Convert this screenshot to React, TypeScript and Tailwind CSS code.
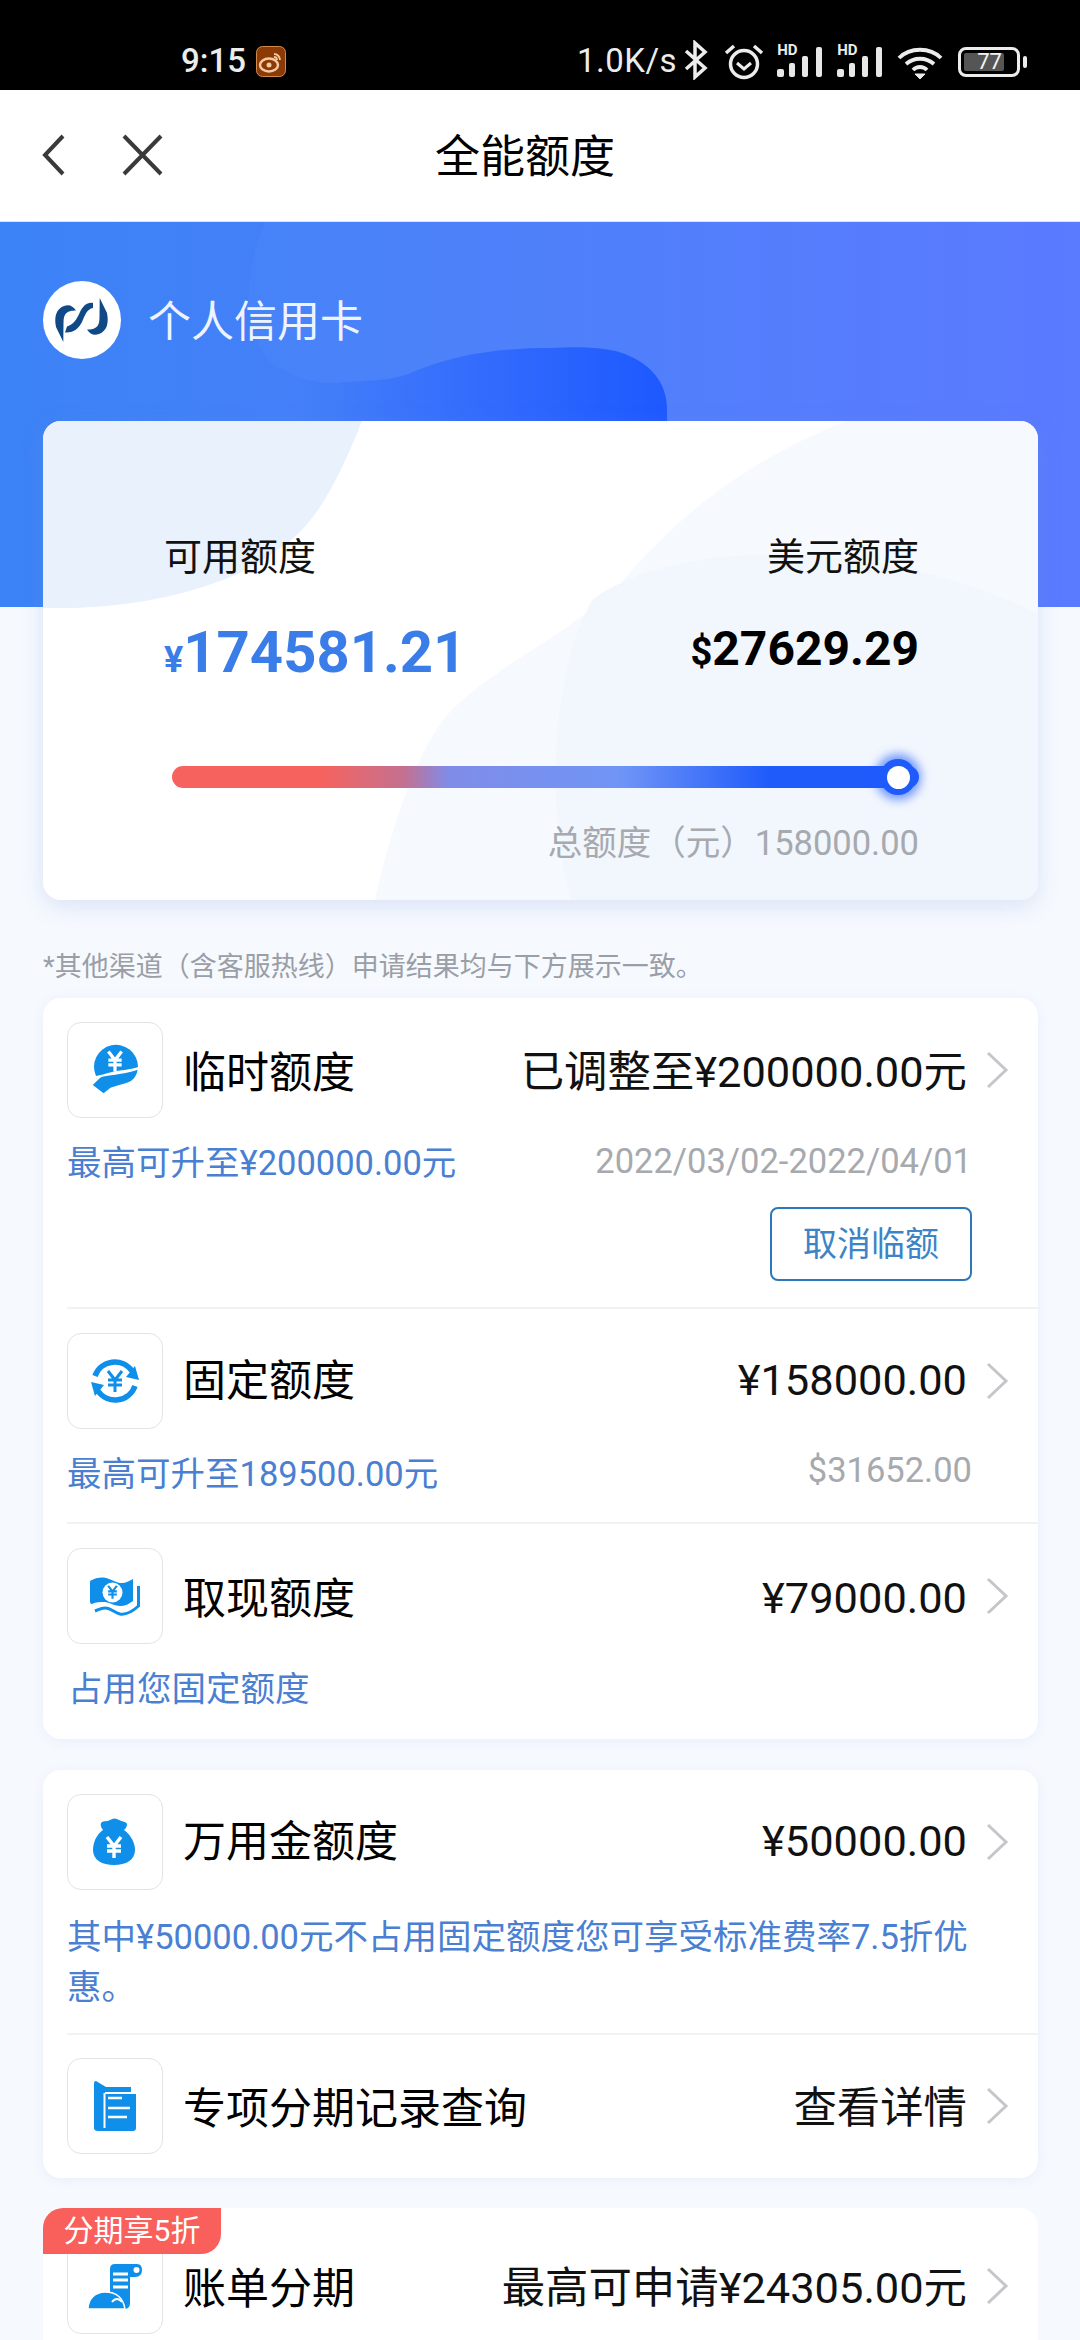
const cjk = "font-['Roboto','Noto_Sans_CJK_SC',sans-serif]";

function Chevron() {
  return (
    <svg width="26" height="38" viewBox="0 0 26 38" fill="none" className="shrink-0">
      <path d="M4 2 L22 19 L4 36" stroke="#c4c6c9" strokeWidth="3" />
    </svg>
  );
}

function Yen({ x, y, s = 1, color = '#fff', w = 3 }: { x: number; y: number; s?: number; color?: string; w?: number }) {
  return (
    <path
      transform={`translate(${x} ${y}) scale(${s})`}
      d="M-7 -10 L0 -1 L7 -10 M-7 -1 H7 M-7 4 H7 M0 -1 V11"
      stroke={color}
      strokeWidth={w}
      fill="none"
    />
  );
}

function HandIcon() {
  return (
    <svg width="50" height="52" viewBox="0 0 50 52">
      <path d="M6 32 A22 22 0 1 1 48 23 C40 26 30 26 22 28 C15 30 10 31 6 32 Z" fill="#0f8fe9" />
      <Yen x={25} y={17} s={0.95} w={3.4} />
      <path d="M1.7 41 L10 33 C16 30 22 31 28 29.5 C35 28 42 28 48.5 24.5 C48 30 46 34 42 37 C37 41 28 41 20 45 L13.5 50 Z" fill="#0f8fe9" stroke="#fff" strokeWidth="1.4" />
    </svg>
  );
}

function CycleIcon() {
  return (
    <svg width="50" height="50" viewBox="0 0 50 50" fill="none">
      <path d="M5 20 A21 21 0 0 1 42 15" stroke="#0f8fe9" strokeWidth="5.5" />
      <path d="M45 30 A21 21 0 0 1 8 35" stroke="#0f8fe9" strokeWidth="5.5" />
      <path d="M36 21 L49 24 L45 10 Z" fill="#0f8fe9" />
      <path d="M14 29 L1 26 L5 40 Z" fill="#0f8fe9" />
      <Yen x={25} y={25} s={1} color="#0f8fe9" />
    </svg>
  );
}

function BillIcon() {
  return (
    <svg width="52" height="50" viewBox="0 0 52 50">
      <path d="M3 9 C10 6 14 6 20 8 C26 10 28 12 33 12 C37 12 40 10 44 8 V30 C40 33 36 35 31 35 C26 35 22 32 16 31 C11 31 7 31 3 33 Q1 33 1 31 V11 Q1 9 3 9 Z" fill="#0f8fe9" />
      <circle cx="23.5" cy="21.5" r="10" fill="#fff" />
      <Yen x={23.5} y={21} s={0.62} color="#0f8fe9" w={3.4} />
      <path d="M49.5 15 V35 C44 40 37 44 31 43 C26 42 22 37 16 37 C12 37 9 39 6 40" stroke="#0f8fe9" strokeWidth="3" fill="none" />
    </svg>
  );
}

function BagIcon() {
  return (
    <svg width="48" height="48" viewBox="0 0 48 48">
      <path d="M10 5 C13 2 16 4 19 2 C22 0 25 0 28 2 C31 4 35 3 36 6 C36 10 33 12 31 13 H14 C11 12 9 8 10 5 Z" fill="#0f8fe9" />
      <path d="M12 12 H33 C40 17 44 25 44 32 C44 42 35 47 23 47 C11 47 2 42 2 32 C2 25 5 17 12 12 Z" fill="#0f8fe9" />
      <Yen x={23} y={29} s={1} w={3.4} />
    </svg>
  );
}

function FolderIcon() {
  return (
    <svg width="42" height="50" viewBox="0 0 42 50">
      <path d="M2 0 L12 6 H37 V12 H42 V47 Q42 50 39 50 H4 Q0 50 0 47 V2 Q0 0 2 0 Z" fill="#0f8fe9" />
      <path d="M11 12 H42 M10.5 12 V47" stroke="#fff" strokeWidth="2" fill="none" />
      <path d="M14 17 H28 M14 27 H36 M14 36 H33" stroke="#fff" strokeWidth="2.5" />
    </svg>
  );
}

function ScrollIcon() {
  return (
    <svg width="56" height="47" viewBox="0 0 56 47">
      <path d="M23 6 Q23 1 28 1 H50 Q55 1 55 7 Q55 14 48 14 H43 V40 Q43 46 37 46 H23 Z" fill="#0f8fe9" />
      <circle cx="49.5" cy="7" r="3" fill="#fff" />
      <path d="M26 11 H41 M26 17 H41 M26 24 H41" stroke="#fff" strokeWidth="3" />
      <path d="M1 46 C1 36 8 29 18 29 C28 29 36 34 38 46 Z" fill="#0f8fe9" stroke="#fff" strokeWidth="1.5" />
      <path d="M25 39 C28 35 32 35 35 39" stroke="#fff" strokeWidth="2" fill="none" />
    </svg>
  );
}

function Logo() {
  const hook = 'M20.3 61 L13 46 C11 36 13 28 21 25 C26 23 30 25 33 29.5 C29 29.5 25 30 22.5 33 C21 35 20.5 38 20.5 42 Z';
  return (
    <svg width="78" height="78" viewBox="0 0 78 78">
      <circle cx="39" cy="39" r="39" fill="#fff" />
      <path d={hook} fill="#0f4a86" />
      <path d={hook} fill="#0f4a86" transform="rotate(180 38.5 39)" />
      <path d="M50 22 C44 21 40 25 37 31 C34 38 31 43 24 45.5 L22 51.5 C31 52 36 47 39 41 C42 34 44 28 50 27 Z" fill="#0f4a86" />
    </svg>
  );
}

function Signal() {
  return (
    <div className="relative w-[46px] h-[31px]">
      <span className="absolute left-0 top-[-3px] text-[15px] leading-[15px] font-bold text-[#ececec] font-['Roboto',sans-serif]">HD</span>
      <svg width="46" height="31" viewBox="0 0 46 31" fill="#e8e8e8">
        <rect x="0" y="23" width="7" height="8" rx="2" />
        <rect x="12" y="17" width="6" height="14" rx="2" />
        <rect x="25" y="10" width="6" height="21" rx="2" />
        <rect x="39" y="1" width="6" height="30" rx="2" />
      </svg>
    </div>
  );
}

type Row = {
  icon: React.ReactNode;
  title: string;
  value: string;
  high?: boolean;
};

function MainRow({ icon, title, value, high }: Row) {
  return (
    <div className="flex items-center pl-[24px] pr-[28px]">
      <div className="w-[96px] h-[96px] shrink-0 rounded-[14px] border border-[#e3e3e3] bg-white flex items-center justify-center">
        {icon}
      </div>
      <span className={`ml-[20px] text-[43px] leading-[56px] text-black ${high ? 'pt-0' : 'pt-[5px]'}`}>{title}</span>
      <span className={`ml-auto mr-[17px] text-[43.4px] leading-[56px] text-[#111] ${high ? 'pt-0' : 'pt-[5px]'}`}>{value}</span>
      <Chevron />
    </div>
  );
}

function Divider() {
  return <div className="ml-[24px] h-[2px] bg-[#f1f2f3]" />;
}

const blue = 'text-[#4a7fd2]';

export default function App() {
  return (
    <div className={`w-[1080px] h-[2340px] overflow-hidden bg-[#f6f9fe] ${cjk}`}>
      {/* status bar */}
      <div className="h-[90px] bg-black flex items-end pb-[10px] text-[#ececec]">
        <span className="ml-[181px] text-[33px] leading-[38px] font-medium">9:15</span>
        <svg width="30" height="31" viewBox="0 0 30 31" className="ml-[10px] mb-[3px]">
          <rect x="0.5" y="0.5" width="29" height="30" rx="6" fill="#8b3a06" stroke="#d58a4c" />
          <ellipse cx="13" cy="19" rx="9" ry="6.5" fill="none" stroke="#f4c9a0" strokeWidth="2.5" />
          <circle cx="13" cy="19" r="2.5" fill="#f4c9a0" />
          <path d="M18 8 A6 6 0 0 1 24 14 M18 11 A3 3 0 0 1 21 14" fill="none" stroke="#f4c9a0" strokeWidth="1.8" />
        </svg>
        <span className="ml-[291px] text-[33px] leading-[38px] tracking-[0.5px]">1.0K/s</span>
        <svg width="24" height="40" viewBox="0 0 24 40" fill="none" stroke="#ececec" strokeWidth="3.5" className="ml-[7px]">
          <path d="M2 11 L21 28 L11 37 V3 L21 12 L2 29" />
        </svg>
        <svg width="40" height="36" viewBox="0 0 40 36" fill="none" stroke="#ececec" className="ml-[16px]">
          <circle cx="20" cy="20" r="13.5" strokeWidth="3.5" />
          <path d="M13 19 L20 25 L27 19" strokeWidth="3" />
          <path d="M2 9 L10 2 M38 9 L30 2" strokeWidth="3.5" />
        </svg>
        <div className="ml-[13px] mb-[3px]"><Signal /></div>
        <div className="ml-[14px] mb-[3px]"><Signal /></div>
        <svg width="46" height="34" viewBox="0 0 46 34" fill="none" stroke="#ececec" strokeWidth="3.8" className="ml-[14px]">
          <path d="M2 12 C13 1 33 1 44 12" />
          <path d="M9 18 C17 11 29 11 37 18" />
          <path d="M16 24 C20 20 26 20 30 24" />
          <path d="M18 28 L23 33 L28 28 Z" fill="#ececec" strokeWidth="1" />
        </svg>
        <div className="relative ml-[15px] mb-[3px] w-[62px] h-[30px] rounded-[8px] border-[3px] border-[#ececec] flex items-center">
          <div className="ml-[3px] w-[40px] h-[18px] rounded-[2px] bg-[#555]" />
          <span className="absolute left-[16px] top-[1px] text-[22px] leading-[22px] text-[#f2f2f2]">77</span>
          <div className="absolute right-[-10px] top-[6px] w-[4px] h-[12px] rounded-[2px] bg-[#ececec]" />
        </div>
      </div>

      {/* nav */}
      <div className="relative h-[132px] bg-white flex items-center justify-center pr-[30px] pt-[4px] border-b border-[#dbe6f5]">
        <svg width="130" height="44" viewBox="0 0 130 44" fill="none" stroke="#3a3a3a" strokeWidth="4" className="absolute left-[41px] top-[43px]">
          <path d="M22 3 L4 22 L22 41" />
          <path d="M83 3 L120 41 M120 3 L83 41" />
        </svg>
        <span className="text-[45px] leading-[56px] text-black">全能额度</span>
      </div>

      {/* blue header */}
      <div className="relative h-[385px] bg-gradient-to-r from-[#3b83f6] to-[#5777ff] overflow-hidden">
        <svg width="1080" height="385" viewBox="0 0 1080 385" className="absolute left-0 top-0">
          <defs>
            <linearGradient id="blob" gradientUnits="userSpaceOnUse" x1="300" x2="667" y1="0" y2="0">
              <stop offset="0" stopColor="#1c59ff" stopOpacity="0" />
              <stop offset="1" stopColor="#1c59ff" />
            </linearGradient>
          </defs>
          <path d="M265 0 C245 50 240 100 268 138 C290 155 320 165 344 160 C370 158 390 160 413 150 C460 130 510 126 550 126 C585 124 610 126 625 132 C650 142 668 160 667 190 V385 H1080 V0 Z" fill="#fff" fillOpacity="0.025" />
          <path d="M268 138 C290 155 320 165 344 160 C370 158 390 160 413 150 C460 130 510 126 550 126 C585 124 610 126 625 132 C650 142 668 160 667 190 V385 H268 Z" fill="url(#blob)" />
        </svg>
        <div className="relative flex items-center pl-[43px] pt-[59px]">
          <Logo />
          <span className="ml-[27px] pt-[3px] text-[43px] leading-[56px] text-[#eef4ff]">个人信用卡</span>
        </div>
      </div>

      <div className="-mt-[186px] relative pl-[43px] pr-[42px]">
        {/* balance card */}
        <div className="relative h-[479px] rounded-[18px] bg-white overflow-hidden shadow-[0_6px_22px_rgba(120,150,220,0.22)]">
          <svg width="995" height="479" viewBox="0 0 995 479" className="absolute left-0 top-0">
            <path d="M0 0 H319 C295 60 270 110 232 130 C190 165 100 187 19 187 H0 Z" fill="#e9f1fd" />
            <path d="M804 0 C700 40 630 100 577 163 C525 215 450 245 405 293 C370 335 345 420 332 479 H995 V0 Z" fill="#f6f9fe" />
            <path d="M528 479 C505 400 505 260 549 179 C600 140 700 130 760 134 C850 140 930 160 995 193 V479 Z" fill="#f2f6fd" />
          </svg>
          <div className="relative pl-[121px] pr-[119px] pt-[111px]">
            <div className="flex justify-between text-[38px] leading-[50px] text-[#111]">
              <span>可用额度</span>
              <span>美元额度</span>
            </div>
            <div className="mt-[34px] flex justify-between items-start h-[72px] font-bold">
              <span className="text-[#3b7de8] text-[58px] leading-[72px]">
                <span className="text-[36px]">¥</span>174581.21
              </span>
              <span className="mt-[3px] text-black text-[48px] leading-[60px]">
                <span className="text-[38px]">$</span>27629.29
              </span>
            </div>
            <div className="relative mt-[78px] ml-[8px] h-[22px] rounded-full bg-[linear-gradient(90deg,#f6635e_0%,#f6635e_20%,#c47090_31%,#7f8ce8_37%,#7095f6_60%,#1f5bfb_80%,#1f5bfb_100%)]">
              <div className="absolute right-[3px] top-[-7px] w-[36px] h-[36px] rounded-full bg-[#1f5bfb] shadow-[0_0_10px_5px_rgba(31,91,251,0.6)] flex items-center justify-center">
                <div className="w-[23px] h-[23px] rounded-full bg-white" />
              </div>
            </div>
            <div className="mt-[33px] text-right text-[34.5px] leading-[44px] text-[#a6a9ae]">总额度（元）158000.00</div>
          </div>
        </div>

        <p className="mt-[50px] text-[27px] leading-[34px] text-[#9a9ea6]">*其他渠道（含客服热线）申请结果均与下方展示一致。</p>

        {/* limits card */}
        <div className="mt-[14px] rounded-[18px] bg-white shadow-[0_2px_12px_rgba(120,150,220,0.1)] pt-[24px] pb-[30px]">
          <MainRow icon={<HandIcon />} title="临时额度" value="已调整至¥200000.00元" />
          <div className="mt-[25px] flex justify-between pl-[24px] pr-[66px] text-[34.5px] leading-[40px]">
            <span className={blue}>最高可升至¥200000.00元</span>
            <span className="-mt-[2px] text-[#a6a9ae]">2022/03/02-2022/04/01</span>
          </div>
          <div className="mt-[24px] mb-[26px] flex justify-end pr-[66px]">
            <button className="w-[202px] h-[74px] rounded-[8px] border-2 border-[#2d78b8] text-[34px] text-[#3c83c8]">取消临额</button>
          </div>
          <Divider />
          <div className="pt-[24px]">
            <MainRow icon={<CycleIcon />} title="固定额度" value="¥158000.00" high />
            <div className="mt-[25px] mb-[28px] flex justify-between pl-[24px] pr-[66px] text-[34.5px] leading-[40px]">
              <span className={blue}>最高可升至189500.00元</span>
              <span className="-mt-[4px] text-[#a6a9ae]">$31652.00</span>
            </div>
          </div>
          <Divider />
          <div className="pt-[24px]">
            <MainRow icon={<BillIcon />} title="取现额度" value="¥79000.00" />
            <div className={`mt-[25px] pl-[25px] text-[34.5px] leading-[40px] ${blue}`}>占用您固定额度</div>
          </div>
        </div>

        {/* wanyongjin card */}
        <div className="mt-[31px] rounded-[18px] bg-white shadow-[0_2px_12px_rgba(120,150,220,0.1)] pt-[24px] pb-[24px]">
          <MainRow icon={<BagIcon />} title="万用金额度" value="¥50000.00" high />
          <p className={`mt-[22px] mb-[21px] pl-[24px] pr-[58px] text-[34.5px] leading-[50px] ${blue}`}>
            其中¥50000.00元不占用固定额度您可享受标准费率7.5折优惠。
          </p>
          <Divider />
          <div className="pt-[23px]">
            <MainRow icon={<FolderIcon />} title="专项分期记录查询" value="查看详情" />
          </div>
        </div>

        {/* installment card */}
        <div className="relative mt-[30px] rounded-[18px] bg-white pt-[30px] pb-[24px]">
          <div className="absolute left-0 top-0 z-10 w-[178px] h-[46px] rounded-tl-[20px] rounded-br-[20px] bg-[#f9605c] text-center text-[30px] leading-[46px] text-white">
            分期享5折
          </div>
          <MainRow icon={<ScrollIcon />} title="账单分期" value="最高可申请¥24305.00元" />
        </div>
      </div>
    </div>
  );
}
